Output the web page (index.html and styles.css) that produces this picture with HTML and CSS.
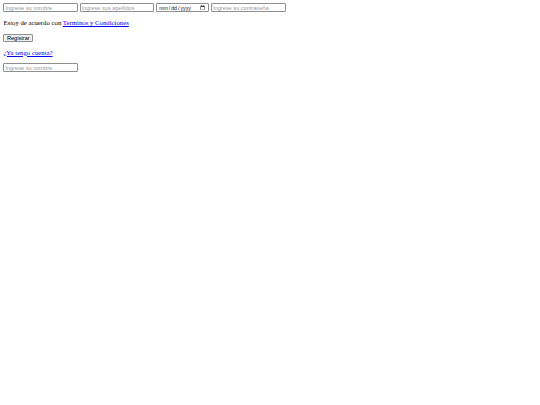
FILE: index.html
```html
<!DOCTYPE html>
<html lang="es">
<head>
<meta charset="utf-8">
<title>Registro</title>
<link rel="stylesheet" href="styles.css">
</head>
<body>
<form class="form">
  <div class="fields">
    <input class="field" type="text" placeholder="Ingrese su nombre">
    <input class="field" type="text" placeholder="Ingrese sus apellidos">
    <input class="field date" type="date">
    <input class="field" type="password" placeholder="Ingrese su contraseña">
  </div>
  <p class="para">Estoy de acuerdo con <a class="link" href="#">Terminos y Condiciones</a></p>
  <p class="para"><button class="btn" type="button">Registrar</button></p>
  <p class="para"><a class="link" href="#">¿Ya tengo cuenta?</a></p>
  <div class="fields last">
    <input class="field" type="text" placeholder="Ingrese su nombre">
  </div>
</form>
</body>
</html>
```

FILE: styles.css
```css
html { background: #fff; }
body {
  margin: 3.375px;
  font-family: "Liberation Serif", "Times New Roman", serif;
  font-size: 6.75px;
  color: #000;
}
.form { margin: 0; }
.fields { margin: 0; }
.last { padding-top: 0.6px; }
.field {
  box-sizing: border-box;
  width: 74.7px;
  height: 8.9px;
  padding: 0 1px;
  border: 0.6px solid #8f8f8f;
  border-radius: 1px;
  font-family: "Liberation Sans", Arial, sans-serif;
  font-size: 5.625px;
  color: #000;
  vertical-align: middle;
}
.field::placeholder { color: #9a9a9a; }
.date {
  width: 53.2px;
  font-family: "Liberation Sans", Arial, sans-serif;
  font-size: 5.2px;
  color: #111;
}
.para { margin: 6.75px 0; }
.link { color: #0000ee; }
.btn {
  box-sizing: border-box;
  height: 8.45px;
  padding: 0 2.5px;
  margin-top: 0.85px;
  border: 0.6px solid #8f8f8f;
  border-radius: 1px;
  background: #efefef;
  font-family: "Liberation Sans", Arial, sans-serif;
  font-size: 5.625px;
  color: #000;
}
```
